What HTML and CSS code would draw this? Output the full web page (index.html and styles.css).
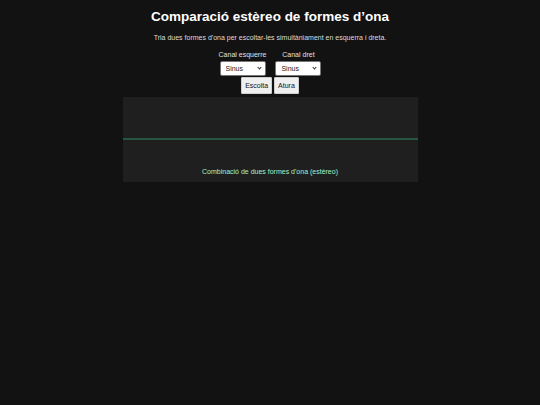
FILE: index.html
```html
<!DOCTYPE html>
<html lang="ca">
<head>
    <meta charset="UTF-8">
    <meta name="viewport" content="width=device-width, initial-scale=1.0">
    <title>Comparació estèreo de formes d’ona</title>
    <link rel="stylesheet" href="styles.css">
</head>
<body>
    <div class="app">
        <h1>Comparació estèreo de formes d’ona</h1>
        <p class="intro">Tria dues formes d'ona per escoltar-les simultàniament en esquerra i dreta.</p>

        <div class="channels">
            <label class="channel">
                <span>Canal esquerre</span>
                <span class="select-wrap">
                    <select id="left-wave">
                        <option>Sinus</option>
                        <option>Quadrada</option>
                        <option>Triangle</option>
                        <option>Dent de serra</option>
                    </select>
                </span>
            </label>
            <label class="channel">
                <span>Canal dret</span>
                <span class="select-wrap">
                    <select id="right-wave">
                        <option>Sinus</option>
                        <option>Quadrada</option>
                        <option>Triangle</option>
                        <option>Dent de serra</option>
                    </select>
                </span>
            </label>
        </div>

        <div class="buttons">
            <button id="play-btn">Escolta</button>
            <button id="stop-btn">Atura</button>
        </div>

        <div class="scope">
            <svg class="wave" viewBox="0 0 295 68" preserveAspectRatio="none">
                <line x1="0" y1="42" x2="295" y2="42" stroke="#2f8c66" stroke-width="1.2"></line>
            </svg>
            <p class="caption">Combinació de dues formes d'ona (estèreo)</p>
        </div>
    </div>
</body>
</html>
```

FILE: styles.css
```css
body {
    font-family: "Liberation Sans", Arial, sans-serif;
    margin: 0;
    padding: 0;
    background-color: #121212;
    color: #e8e8e8;
}

.app {
    width: 295px;
    margin: 0 auto;
    display: flex;
    flex-direction: column;
    align-items: center;
}

h1 {
    font-size: 13.5px;
    font-weight: bold;
    color: #ffffff;
    margin: 9px 0 0;
    white-space: nowrap;
}

.intro {
    font-size: 7px;
    margin: 10px 0 0;
    color: #dcdcdc;
    white-space: nowrap;
}

.channels {
    display: flex;
    gap: 9px;
    margin-top: 10px;
}

.channel {
    display: flex;
    flex-direction: column;
    align-items: center;
    gap: 3px;
    font-size: 7px;
    color: #e0e0e0;
}

.select-wrap {
    position: relative;
    display: block;
}

.select-wrap::after {
    content: "";
    position: absolute;
    right: 5px;
    top: 5px;
    width: 2px;
    height: 2px;
    border-right: 1px solid #333;
    border-bottom: 1px solid #333;
    transform: rotate(45deg);
    pointer-events: none;
}

.select-wrap select {
    appearance: none;
    -webkit-appearance: none;
    display: block;
    width: 46px;
    height: 15px;
    font-family: "Liberation Sans", Arial, sans-serif;
    font-size: 7px;
    padding: 0 0 0 5px;
    background-color: #ffffff;
    color: #222;
    border: 1px solid #767676;
    border-radius: 2px;
}

.buttons {
    display: flex;
    gap: 2px;
    margin-top: 1px;
}

.buttons button {
    font-family: "Liberation Sans", Arial, sans-serif;
    font-size: 7px;
    height: 17px;
    padding: 0 3px;
    background-color: #efefef;
    color: #111;
    border: 1px solid #cfcfcf;
    border-radius: 1px;
    cursor: pointer;
}

.buttons button:hover {
    background-color: #e2e2e2;
}

.scope {
    width: 295px;
    margin-top: 3px;
    background-color: #1f1f1f;
}

.wave {
    display: block;
    width: 100%;
    height: 68px;
}

.caption {
    margin: 0;
    height: 17px;
    line-height: 14px;
    font-size: 7px;
    text-align: center;
    color: #a6f0c6;
}
```
